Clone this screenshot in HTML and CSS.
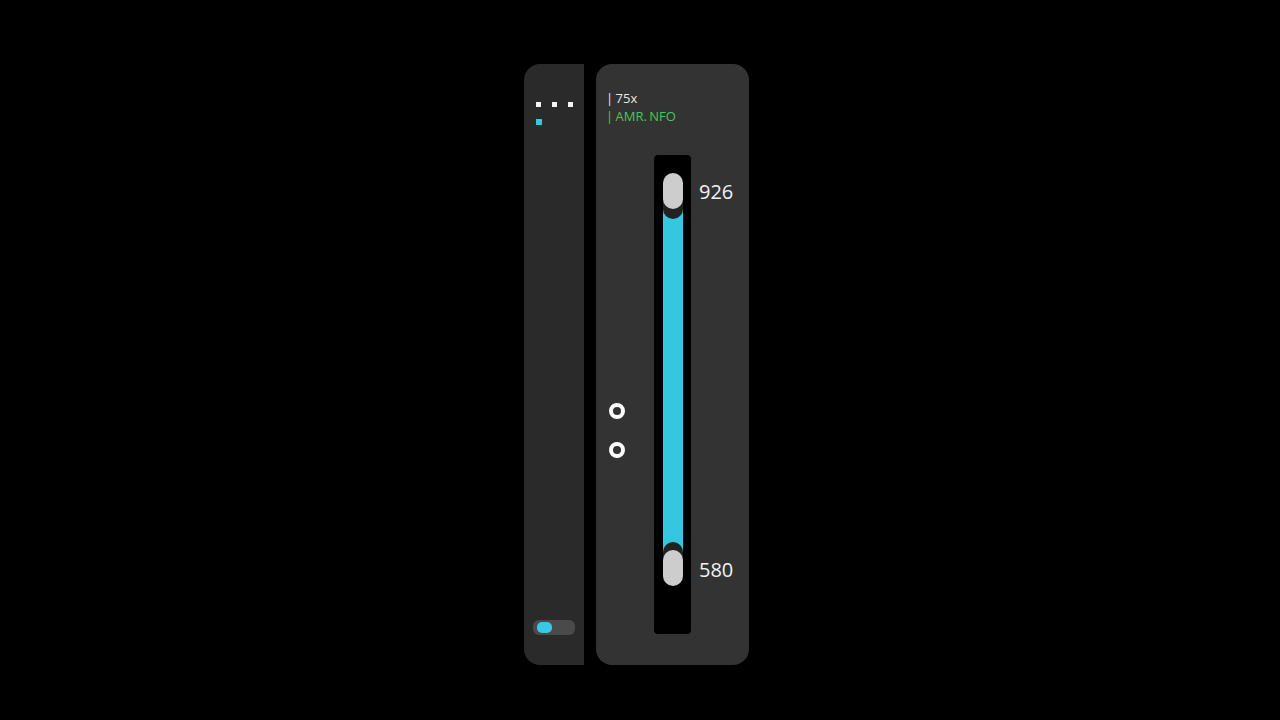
FILE: index.html
```html
<!DOCTYPE html>
<html>
<head>
<meta charset="utf-8">
<link rel="stylesheet" href="styles.css">
</head>
<body>
<div class="stage">
  <aside class="side">
    <div class="dots">
      <span class="dot"></span><span class="dot"></span><span class="dot"></span>
    </div>
    <span class="dot cyan"></span>
    <div class="toggle"><span class="knob"></span></div>
  </aside>
  <main class="panel">
    <div class="meta">
      <div class="line">| 75x</div>
      <div class="line green">| AMR. NFO</div>
    </div>
    <div class="body">
      <div class="rings">
        <span class="ring"></span>
        <span class="ring"></span>
      </div>
      <div class="track">
        <div class="fill"></div>
        <div class="shadow top"></div>
        <div class="thumb top"></div>
        <div class="shadow bottom"></div>
        <div class="thumb bottom"></div>
      </div>
      <div class="labels">
        <div class="val">926</div>
        <div class="val">580</div>
      </div>
    </div>
  </main>
</div>
</body>
</html>
```
FILE: styles.css
```css
html, body {
  margin: 0;
  padding: 0;
  background: #000;
  width: 1280px;
  height: 720px;
  overflow: hidden;
  font-family: "Open Sans", "Noto Sans", sans-serif;
}
.stage {
  display: flex;
  gap: 12px;
  padding-left: 524px;
  padding-top: 64px;
}
.side {
  width: 60px;
  height: 601px;
  background: #2a2a2a;
  border-radius: 16px 0 0 16px;
  display: flex;
  flex-direction: column;
  box-sizing: border-box;
  padding: 38px 0 0 12px;
}
.dots {
  display: flex;
  gap: 11px;
}
.dot {
  display: block;
  width: 5px;
  height: 5px;
  background: #f4f4f4;
}
.dot.cyan {
  margin-top: 12px;
  width: 6px;
  height: 6px;
  background: #3cc6dc;
}
.toggle {
  margin-top: auto;
  margin-bottom: 30px;
  margin-left: -3px;
  width: 42px;
  height: 15px;
  border-radius: 6px;
  background: #4a4a4a;
  box-sizing: border-box;
  padding: 2px 4px;
}
.knob {
  display: block;
  width: 15px;
  height: 11px;
  border-radius: 5px;
  background: #38c8e8;
}
.panel {
  width: 153px;
  height: 601px;
  background: #333333;
  border-radius: 16px;
  box-sizing: border-box;
  padding-top: 25px;
}
.meta {
  padding-left: 10px;
}
.line {
  font-size: 13px;
  line-height: 18px;
  color: #e8e8e8;
  word-spacing: -1px;
}
.line.green {
  color: #42c956;
}
.body {
  display: flex;
  margin-top: 30px;
  padding-left: 13px;
}
.rings {
  width: 16px;
  display: flex;
  flex-direction: column;
  gap: 23px;
  padding-top: 248px;
}
.ring {
  display: block;
  width: 16px;
  height: 16px;
  box-sizing: border-box;
  border: 4px solid #fff;
  border-radius: 50%;
}
.track {
  position: relative;
  margin-left: 29px;
  width: 37px;
  height: 479px;
  background: #000;
  border-radius: 4px;
}
.fill {
  position: absolute;
  left: 9px;
  width: 20px;
  top: 50px;
  bottom: 80px;
  background: #35c6e0;
}
.thumb, .shadow {
  position: absolute;
  left: 9px;
  width: 20px;
  height: 36px;
  border-radius: 10px;
}
.thumb {
  background: #cdcdcd;
}
.shadow {
  background: #222;
}
.thumb.top { top: 18px; }
.shadow.top { top: 28px; }
.thumb.bottom { top: 395px; }
.shadow.bottom { top: 387px; }
.labels {
  margin-left: 8px;
  padding-top: 23px;
  display: flex;
  flex-direction: column;
  gap: 350px;
}
.val {
  font-size: 20px;
  line-height: 28px;
  color: #f2f2f2;
}
```
